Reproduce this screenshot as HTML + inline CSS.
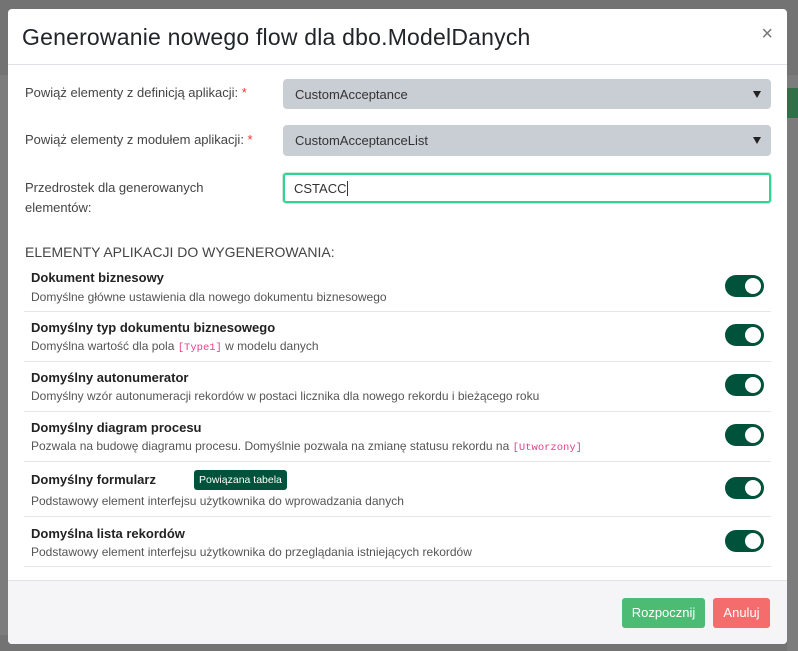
<!DOCTYPE html>
<html><head><meta charset="utf-8"><style>
*{box-sizing:border-box;margin:0;padding:0}
body{width:798px;height:651px;background:#737373;font-family:"Liberation Sans",sans-serif;position:relative;overflow:hidden;color:#212529}
.bgl{position:absolute;left:0;top:75px;width:8px;height:560px;background:#7c7c7c}
.bgr{position:absolute;left:787px;top:75px;width:11px;height:576px;background:#7c7c7c}
.modal{position:absolute;left:8px;top:9px;width:779px;height:635px;background:#fff;border-radius:4px;overflow:hidden}
.hdr{height:56px;border-bottom:1px solid #dee2e6;position:relative}
.hdr h1{position:absolute;left:14px;top:15px;font-size:23px;font-weight:normal;color:#212529;letter-spacing:0.2px}
.close{position:absolute;right:14px;top:14px;font-size:20px;color:#777}
.lbl{position:absolute;left:17px;font-size:13px;color:#444;line-height:20px}
.lbl .r{color:#e33}
.sel{position:absolute;left:275px;width:488px;height:30px;background:#c9cdd4;border-radius:4px;font-size:13px;color:#333;padding:8px 12px}
.sel:after{content:"";position:absolute;right:10px;top:12px;border-left:4px solid transparent;border-right:4px solid transparent;border-top:7px solid #222}
.inp{position:absolute;left:275px;top:164px;width:488px;height:30px;border:2px solid #2ed48f;box-shadow:0 0 0 1px #cde8da;border-radius:3px;font-size:13px;color:#333;padding:6px 9px}
.sec{position:absolute;left:17px;top:235px;font-size:14px;color:#444;font-weight:300}
.item{position:absolute;left:16px;width:747px;border-bottom:1px solid #e6e6e6}
.item b{position:absolute;left:7px;font-size:13px;color:#222}
.item span.d{position:absolute;left:7px;font-size:12px;color:#555;white-space:nowrap}
code{font-family:"Liberation Mono",monospace;color:#e83e8c;font-size:10.5px}
.tg{position:absolute;left:701px;width:39px;height:22px;border-radius:11px;background:#00533a}
.tg:after{content:"";position:absolute;right:3px;top:3px;width:16px;height:16px;border-radius:50%;background:#fff}
.badge{position:absolute;left:170px;top:0;background:#00533a;color:#fff;font-size:10.5px;padding:4px 5px;border-radius:3px}
.ftr{position:absolute;left:0;top:571px;width:779px;height:64px;background:#f5f5f7;border-top:1px solid #e2e2e6}
.btn{position:absolute;top:17px;height:30px;border-radius:3px;color:#fff;font-size:13px;text-align:center;line-height:30px}
</style></head><body>
<div class="bgl"></div><div class="bgr"></div>
<div style="position:absolute;left:787px;top:88px;width:11px;height:30px;background:#2f7048"></div>
<div class="modal">
<div class="hdr"><h1>Generowanie nowego flow dla dbo.ModelDanych</h1><div class="close">×</div></div>
<div class="lbl" style="top:74px">Powiąż elementy z definicją aplikacji: <span class="r">*</span></div>
<div class="sel" style="top:70px">CustomAcceptance</div>
<div class="lbl" style="top:121px">Powiąż elementy z modułem aplikacji: <span class="r">*</span></div>
<div class="sel" style="top:116px;height:31px">CustomAcceptanceList</div>
<div class="lbl" style="top:169px">Przedrostek dla generowanych<br>elementów:</div>
<div class="inp">CSTACC<span style="border-left:1px solid #333;margin-left:1px"></span></div>
<div class="sec">ELEMENTY APLIKACJI DO WYGENEROWANIA:</div>

<div class="item" style="top:252px;height:51px"><b style="top:9px">Dokument biznesowy</b><span class="d" style="top:29px">Domyślne główne ustawienia dla nowego dokumentu biznesowego</span><div class="tg" style="top:14px"></div></div>
<div class="item" style="top:302px;height:51px"><b style="top:9px">Domyślny typ dokumentu biznesowego</b><span class="d" style="top:28px">Domyślna wartość dla pola <code>[Type1]</code> w modelu danych</span><div class="tg" style="top:13px"></div></div>
<div class="item" style="top:352px;height:51px"><b style="top:9px">Domyślny autonumerator</b><span class="d" style="top:28px">Domyślny wzór autonumeracji rekordów w postaci licznika dla nowego rekordu i bieżącego roku</span><div class="tg" style="top:13px"></div></div>
<div class="item" style="top:402px;height:51px"><b style="top:9px">Domyślny diagram procesu</b><span class="d" style="top:28px">Pozwala na budowę diagramu procesu. Domyślnie pozwala na zmianę statusu rekordu na <code>[Utworzony]</code></span><div class="tg" style="top:13px"></div></div>
<div class="item" style="top:452px;height:56px"><b style="top:11px">Domyślny formularz</b><div class="badge" style="top:9px">Powiązana tabela</div><span class="d" style="top:33px">Podstawowy element interfejsu użytkownika do wprowadzania danych</span><div class="tg" style="top:16px"></div></div>
<div class="item" style="top:507px;height:51px"><b style="top:10px">Domyślna lista rekordów</b><span class="d" style="top:29px">Podstawowy element interfejsu użytkownika do przeglądania istniejących rekordów</span><div class="tg" style="top:14px"></div></div>

<div class="ftr">
<div class="btn" style="left:614px;width:83px;background:#4cbb74">Rozpocznij</div>
<div class="btn" style="left:705px;width:57px;background:#f56c6c">Anuluj</div>
</div>
</div>
</body></html>
